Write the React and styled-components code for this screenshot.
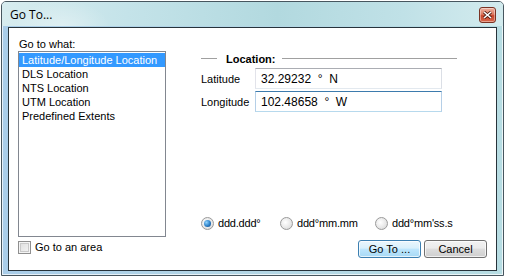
import React, { useState } from 'react';
import styled, { createGlobalStyle } from 'styled-components';

const GlobalStyle = createGlobalStyle`
  html, body {
    margin: 0;
    padding: 0;
    background: #ffffff;
  }
  body {
    font-family: "Liberation Sans", Arial, sans-serif;
    font-size: 11px;
    color: #000;
  }
`;

const Window = styled.div`
  box-sizing: border-box;
  width: 503px;
  height: 275px;
  margin: 1px 0 0 1px;
  border: 1px solid #47565f;
  border-radius: 5px 5px 0 0;
  box-shadow: inset 0 0 0 1px rgba(255, 255, 255, 0.7);
  background: linear-gradient(90deg, #a9cde9 0%, #b3d6e6 45%, #b7dde3 100%);
  display: flex;
  flex-direction: column;
  overflow: hidden;
`;

const TitleBar = styled.div`
  height: 24px;
  display: flex;
  align-items: center;
  padding: 0 7px 0 8px;
  background:
    radial-gradient(ellipse 70px 40px at 60px 26px, rgba(255, 255, 255, 0.35), transparent 70%),
    linear-gradient(90deg, #d7ecef 0%, #c4e3e9 25%, #b2d9df 55%, #c0e1e7 80%, #d3ebee 100%);
`;

const Title = styled.span`
  flex: 1;
  font-family: "Open Sans", "Liberation Sans", sans-serif;
  font-size: 12px;
  color: #000;
  padding-top: 1px;
`;

const CloseButton = styled.div`
  width: 15px;
  height: 14px;
  margin-top: 2px;
  border: 1px solid #7a3324;
  border-radius: 3px;
  background: linear-gradient(180deg, #eeb3a2 0%, #dd7a60 45%, #c8462b 55%, #d8684c 100%);
  box-shadow: inset 0 0 0 1px rgba(255, 255, 255, 0.4);
  display: flex;
  align-items: center;
  justify-content: center;
`;

const Client = styled.div`
  flex: 1;
  margin: 1px 6px 4px 6px;
  border: 1px solid #27333b;
  background: #ffffff;
  display: grid;
  grid-template-columns: 148px 1fr;
  column-gap: 35px;
  padding: 10px 9px 12px 9px;
`;

const LeftColumn = styled.div`
  display: flex;
  flex-direction: column;
  align-self: start;
`;

const Label = styled.div`
  line-height: 13px;
  height: 13px;
  padding-left: 1px;
`;

const ListBox = styled.div`
  box-sizing: border-box;
  height: 186px;
  border: 1px solid #828790;
  padding: 1px 0 0 0;
`;

const ListItem = styled.div`
  height: 14px;
  line-height: 14px;
  padding-left: 3px;
  background: ${p => (p.selected ? '#3399ff' : 'transparent')};
  color: ${p => (p.selected ? '#ffffff' : '#000000')};
  cursor: default;
`;

const CheckRow = styled.label`
  display: flex;
  align-items: center;
  gap: 4px;
  margin-top: 3px;
  height: 14px;
`;

const CheckBox = styled.span`
  box-sizing: border-box;
  width: 13px;
  height: 13px;
  border: 1px solid #8f8f8f;
  background: linear-gradient(135deg, #dcdcdc 0%, #f6f6f6 100%);
  box-shadow: inset 0 0 0 1px #f4f4f4, inset 0 0 0 2px #c9c9c9;
`;

const RightColumn = styled.div`
  display: flex;
  flex-direction: column;
`;

const GroupHeader = styled.div`
  display: flex;
  align-items: center;
  margin-top: 14px;
  height: 13px;
  width: 256px;
  &::before,
  &::after {
    content: '';
    height: 1px;
    background: #a0a0a0;
  }
  &::before {
    width: 16px;
    margin-right: 9px;
  }
  &::after {
    flex: 1;
    margin-left: 6px;
  }
`;

const GroupTitle = styled.span`
  font-weight: bold;
  font-size: 11px;
`;

const Fields = styled.div`
  display: grid;
  grid-template-columns: 54px 187px;
  row-gap: 2px;
  margin-top: 3px;
  align-items: center;
`;

const FieldLabel = styled.span`
  font-size: 11px;
`;

const Input = styled.input`
  box-sizing: border-box;
  width: 187px;
  height: 21px;
  border: 1px solid ${p => (p.focused ? '#5ea6e6' : '#abadb3')};
  border-top-color: ${p => (p.focused ? '#3d7bad' : '#abadb3')};
  border-left-color: ${p => (p.focused ? '#b5cfe7' : '#e2e3ea')};
  border-right-color: ${p => (p.focused ? '#b5cfe7' : '#dbdfe6')};
  border-bottom-color: ${p => (p.focused ? '#b7d9ed' : '#e3e9ef')};
  padding: 0 5px;
  font-family: "Liberation Sans", Arial, sans-serif;
  font-size: 12px;
  color: #000;
  outline: none;
  background: #fff;
`;

const Spacer = styled.div`
  flex: 1;
`;

const RadioRow = styled.div`
  display: flex;
  align-items: center;
  height: 14px;
`;

const RadioOption = styled.label`
  display: flex;
  align-items: center;
  gap: 4px;
  width: ${p => p.width}px;
`;

const RadioCircle = styled.span`
  box-sizing: border-box;
  width: 13px;
  height: 13px;
  border-radius: 50%;
  border: 1px solid #9a9a9a;
  background: radial-gradient(circle at 40% 40%, #ffffff 0%, #e6e6e6 60%, #cfcfcf 100%);
  display: flex;
  align-items: center;
  justify-content: center;
  &::after {
    content: '';
    display: ${p => (p.checked ? 'block' : 'none')};
    width: 7px;
    height: 7px;
    border-radius: 50%;
    background: radial-gradient(circle at 35% 35%, #8fd3ff 0%, #2b7fc7 55%, #0d3f7a 100%);
  }
`;

const RadioText = styled.span`
  font-size: 11px;
  letter-spacing: -0.2px;
`;

const ButtonRow = styled.div`
  display: flex;
  justify-content: flex-end;
  gap: 3px;
  margin-top: 10px;
`;

const Button = styled.button`
  box-sizing: border-box;
  width: 63px;
  height: 18px;
  padding: 0;
  border: 1px solid ${p => (p.primary ? '#3c7fb1' : '#707070')};
  border-radius: 3px;
  background: ${p =>
    p.primary
      ? 'linear-gradient(180deg, #eaf6fd 0%, #d9f0fc 45%, #bee6fd 50%, #a7d9f5 100%)'
      : 'linear-gradient(180deg, #f2f2f2 0%, #ebebeb 45%, #dddddd 50%, #cfcfcf 100%)'};
  box-shadow: inset 0 0 0 1px rgba(255, 255, 255, 0.7);
  font-family: "Liberation Sans", Arial, sans-serif;
  font-size: 11px;
  color: #000;
  line-height: 14px;
`;

const items = [
  'Latitude/Longitude Location',
  'DLS Location',
  'NTS Location',
  'UTM Location',
  'Predefined Extents',
];

const formats = [
  { label: 'ddd.ddd°', width: 79 },
  { label: 'ddd°mm.mm', width: 95 },
  { label: 'ddd°mm\'ss.s', width: 100 },
];

export default function App() {
  const [selected, setSelected] = useState(0);
  const [format, setFormat] = useState(0);

  return (
    <>
      <GlobalStyle />
      <Window>
        <TitleBar>
          <Title>Go To...</Title>
          <CloseButton>
            <svg width="9" height="8" viewBox="0 0 9 8">
              <path d="M1 1 L8 7 M8 1 L1 7" stroke="#4a1a10" strokeWidth="3" />
              <path d="M1 1 L8 7 M8 1 L1 7" stroke="#ffffff" strokeWidth="1.6" />
            </svg>
          </CloseButton>
        </TitleBar>
        <Client>
          <LeftColumn>
            <Label>Go to what:</Label>
            <ListBox>
              {items.map((item, i) => (
                <ListItem key={item} selected={i === selected} onClick={() => setSelected(i)}>
                  {item}
                </ListItem>
              ))}
            </ListBox>
            <CheckRow>
              <CheckBox />
              <span>Go to an area</span>
            </CheckRow>
          </LeftColumn>
          <RightColumn>
            <GroupHeader>
              <GroupTitle>Location:</GroupTitle>
            </GroupHeader>
            <Fields>
              <FieldLabel>Latitude</FieldLabel>
              <Input defaultValue="32.29232  °  N" />
              <FieldLabel>Longitude</FieldLabel>
              <Input focused defaultValue="102.48658  °  W" />
            </Fields>
            <Spacer />
            <RadioRow>
              {formats.map((f, i) => (
                <RadioOption key={f.label} width={f.width} onClick={() => setFormat(i)}>
                  <RadioCircle checked={i === format} />
                  <RadioText>{f.label}</RadioText>
                </RadioOption>
              ))}
            </RadioRow>
            <ButtonRow>
              <Button primary>Go To ...</Button>
              <Button>Cancel</Button>
            </ButtonRow>
          </RightColumn>
        </Client>
      </Window>
    </>
  );
}
